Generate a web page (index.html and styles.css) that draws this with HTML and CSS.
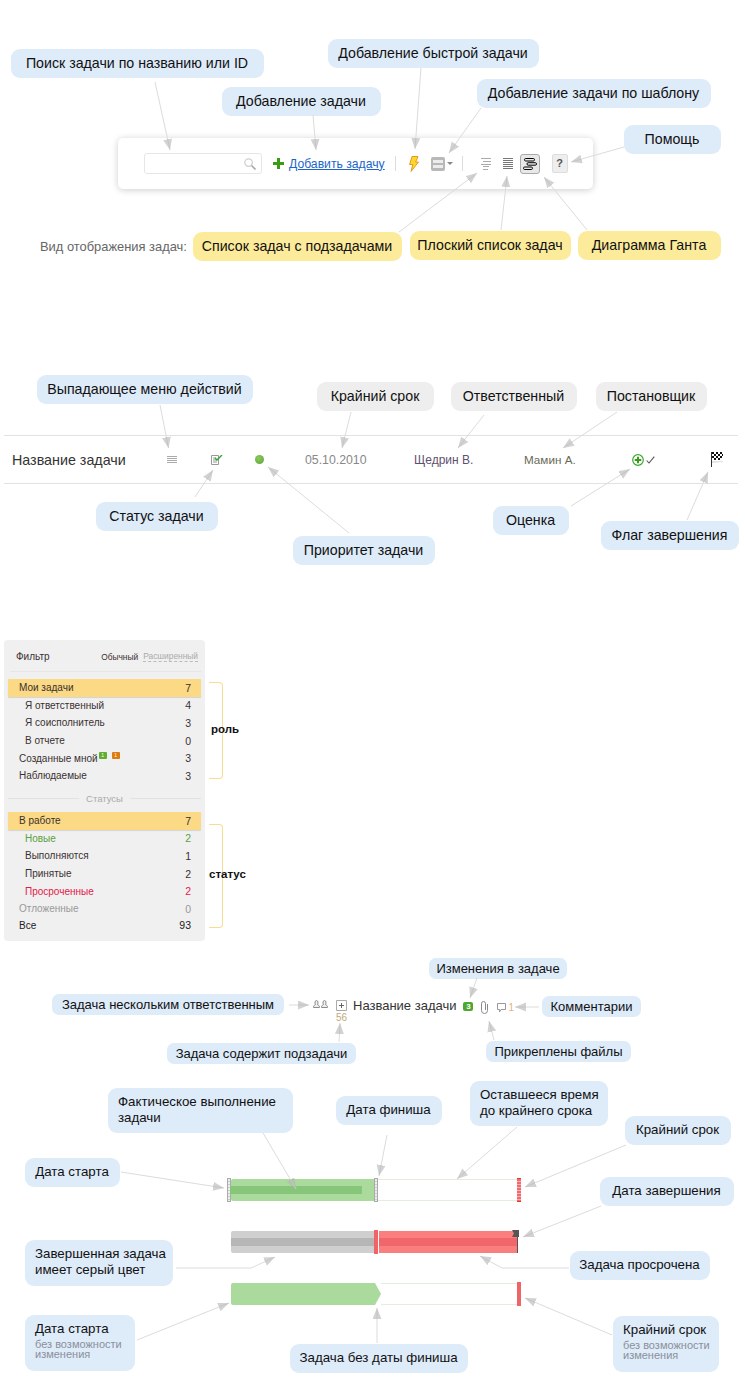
FILE: index.html
```html
<!DOCTYPE html>
<html lang="ru">
<head>
    <meta charset="UTF-8">
    <title>Задачи: условные обозначения</title>
    <link rel="stylesheet" href="styles.css">
</head>
<body>
<div class="page">

    <!-- панель инструментов -->
    <div class="toolbar">
        <div class="search">
            <svg width="12" height="12" viewBox="0 0 12 12"><circle cx="4.6" cy="4.6" r="3.8" fill="none" stroke="#d0d0d0" stroke-width="1.2"/><path d="M7.5 7.5L11.5 11.5" stroke="#aaa" stroke-width="1.6"/></svg>
        </div>
        <svg class="add-icon" width="11" height="11" viewBox="0 0 11 11"><path d="M4 0h3v4h4v3H7v4H4V7H0V4h4z" fill="#3a9c12"/></svg>
        <a class="add-link" href="#">Добавить задачу</a>
        <span class="tool-sep"></span>
        <svg class="bolt" width="10" height="16" viewBox="0 0 10 16"><path d="M3 .5h6L6.6 6h2.9L2 15.5l1.8-7H.6z" fill="#ffd62e" stroke="#e59a1c"/></svg>
        <svg class="tpl" width="14" height="14" viewBox="0 0 14 14"><rect width="14" height="14" rx="2" fill="#b8b8b8"/><path d="M2 3h10v3H2zM2 8h10v3H2z" fill="#ececec"/></svg>
        <span class="caret"></span>
        <span class="tool-sep sep-two"></span>
        <svg class="view-one" width="10" height="12" viewBox="0 0 10 12"><path d="M0 .5h10M2 3.500h8M0 6.500h10M2 8.500h6M2 11.500h5" stroke="#aaa" fill="none"/></svg>
        <svg class="view-two" width="10" height="12" viewBox="0 0 10 12"><path d="M0 .5h10M0 2.500h10M0 4.500h10M0 6.500h10M0 8.500h10M0 10.500h10" stroke="#777" fill="none"/></svg>
        <span class="view-btn">
            <svg width="14" height="12" viewBox="0 0 14 12"><rect x="1.500" y=".5" width="10" height="2.500" rx="1.200" fill="none" stroke="#000"/><rect x="4" y="4.700" width="9.500" height="2.500" rx="1.200" fill="none" stroke="#000"/><rect x=".5" y="9" width="9" height="2.500" rx="1.200" fill="none" stroke="#000"/></svg>
        </span>
        <span class="help-btn">?</span>
    </div>
    <p class="view-label">Вид отображения задач:</p>

    <!-- строка задачи -->
    <div class="task-row">
        <span class="task-name">Название задачи</span>
        <span><svg class="cell-icon" width="10" height="8" viewBox="0 0 10 8"><path d="M0 .5h10M0 2.500h10M0 4.500h10M0 6.500h10" stroke="#aaa" fill="none"/></svg></span>
        <span><svg class="cell-icon" width="12" height="10" viewBox="0 0 12 10"><path d="M.5.500h7v9h-7zM2 3h3M2 5h4M2 7h4" stroke="#999" fill="none"/><path d="M4 3l2 2 5-5" stroke="#2da52d" stroke-width="1.400" fill="none"/></svg></span>
        <span class="prio-dot"></span>
        <span class="task-date">05.10.2010</span>
        <span class="task-resp">Щедрин В.</span>
        <span class="task-author">Мамин А.</span>
        <span class="task-mark">
            <svg width="12" height="12" viewBox="0 0 12 12"><circle cx="6" cy="6" r="5.300" fill="#fff" stroke="#3aa83a" stroke-width="1.200"/><path d="M5 2.700h2V5h2.300v2H7v2.300H5V7H2.700V5H5z" fill="#3a9c12"/></svg>
            <svg width="9" height="8" viewBox="0 0 9 8"><path d="M.7 4.500L3 7 8.300.7" stroke="#555" stroke-width="1.100" fill="none"/></svg>
        </span>
        <span>
            <svg class="flag" width="13" height="15" viewBox="0 0 13 15"><path d="M.5 0v15" stroke="#333"/><path d="M1 9h11v1L1 11z" fill="#e4e4e4"/><path d="M1 0h2v2H1zM5 0h2v2H5zM9 0h2v2H9zM3 2h2v2H3zM7 2h2v2H7zM11 2h1v2h-1zM1 4h2v2H1zM5 4h2v2H5zM9 4h2v2H9zM3 6h2v2H3zM7 6h2v2H7z" fill="#111"/></svg>
        </span>
    </div>

    <!-- фильтр -->
    <div class="filter">
        <div class="filter-head">
            <span class="filter-title">Фильтр</span>
            <span class="filter-mode">Обычный</span>
            <span class="filter-mode mode-off">Расширенный</span>
        </div>
        <div class="filter-item active"><span>Мои задачи</span><b>7</b></div>
        <div class="filter-item sub"><span>Я ответственный</span><b>4</b></div>
        <div class="filter-item sub"><span>Я соисполнитель</span><b>3</b></div>
        <div class="filter-item sub"><span>В отчете</span><b>0</b></div>
        <div class="filter-item"><span>Созданные мной<i class="mini green">1</i><i class="mini orange">1</i></span><b>3</b></div>
        <div class="filter-item"><span>Наблюдаемые</span><b>3</b></div>
        <div class="filter-sep"><span>Статусы</span></div>
        <div class="filter-item active"><span>В работе</span><b>7</b></div>
        <div class="filter-item sub st-new"><span>Новые</span><b>2</b></div>
        <div class="filter-item sub"><span>Выполняются</span><b>1</b></div>
        <div class="filter-item sub"><span>Принятые</span><b>2</b></div>
        <div class="filter-item sub st-late"><span>Просроченные</span><b>2</b></div>
        <div class="filter-item st-off"><span>Отложенные</span><b>0</b></div>
        <div class="filter-item st-all"><span>Все</span><b>93</b></div>
    </div>

    <!-- название задачи с иконками -->
    <div class="title-row">
        <svg class="people" width="15" height="8" viewBox="0 0 15 8"><path d="M.5 7.500c0-2 1-2.500 2-3-1-1.500-.5-4 1-4s2 2.500 1 4c1 .5 2 1 2 3zM8.500 7.500c0-2 1-2.500 2-3-1-1.500-.5-4 1-4s2 2.500 1 4c1 .5 2 1 2 3z" fill="#eee" stroke="#8c8c8c"/></svg>
        <span class="plus-col">
            <svg width="11" height="11" viewBox="0 0 11 11"><path d="M.5.500h10v10H.5z" fill="#fff" stroke="#aaa"/><path d="M3 5.500h5M5.500 3v5" stroke="#666"/></svg>
            <span class="sub-count">56</span>
        </span>
        <span class="title-text">Название задачи</span>
        <span class="change-badge">3</span>
        <svg class="clip" width="9" height="13" viewBox="0 0 9 13"><path d="M7.500 3v6.500a3 3 0 0 1-6 0V2.500a2 2 0 0 1 4 0V9" fill="none" stroke="#8a8a8a"/></svg>
        <svg class="bubble" width="9" height="10" viewBox="0 0 9 10"><path d="M.5.500h8v6H4L2.500 9V6.500h-2z" fill="none" stroke="#999"/></svg>
        <span class="comment-count">1</span>
    </div>

    <!-- диаграмма -->
    <div class="gantt">
        <div class="gantt-row">
            <span class="mark-grey"></span>
            <div class="fill fill-green"><span class="band band-green"></span></div>
            <span class="mark-grey"></span>
            <span class="track"></span>
            <span class="mark-red mark-dotted"></span>
        </div>
        <div class="gantt-row row-shift">
            <div class="fill fill-grey"><span class="band band-grey"></span></div>
            <span class="mark-red mark-white"></span>
            <div class="fill fill-red"><span class="band band-red"></span>
                <svg class="end-flag" width="7" height="7" viewBox="0 0 7 7"><path d="M0 0h7v7H0L2 3.500z" fill="#555"/></svg>
            </div>
        </div>
        <div class="gantt-row row-shift">
            <div class="fill fill-arrow"></div>
            <span class="track track-short"></span>
            <span class="mark-red"></span>
        </div>
    </div>

    <!-- скобки -->
    <div class="bracket br-role"></div>
    <div class="bracket-label lb-role">роль</div>
    <div class="bracket br-status"></div>
    <div class="bracket-label lb-status">статус</div>

    <!-- подписи -->
    <div class="note n-search">Поиск задачи по названию или ID</div>
    <div class="note n-quick">Добавление быстрой задачи</div>
    <div class="note n-add">Добавление задачи</div>
    <div class="note n-tpl">Добавление задачи по шаблону</div>
    <div class="note n-help">Помощь</div>
    <div class="note yellow n-tree">Список задач с подзадачами</div>
    <div class="note yellow n-flat">Плоский список задач</div>
    <div class="note yellow n-gantt">Диаграмма Ганта</div>

    <div class="note n-menu">Выпадающее меню действий</div>
    <div class="note grey n-due">Крайний срок</div>
    <div class="note grey n-resp">Ответственный</div>
    <div class="note grey n-author">Постановщик</div>
    <div class="note n-status">Статус задачи</div>
    <div class="note n-prio">Приоритет задачи</div>
    <div class="note n-mark">Оценка</div>
    <div class="note n-flag">Флаг завершения</div>

    <div class="note small n-changes">Изменения в задаче</div>
    <div class="note small n-multi">Задача нескольким ответственным</div>
    <div class="note small n-comments">Комментарии</div>
    <div class="note small n-subs">Задача содержит подзадачи</div>
    <div class="note small n-files">Прикреплены файлы</div>

    <div class="note chart left n-fact">Фактическое выполнение<br>задачи</div>
    <div class="note chart n-finish">Дата финиша</div>
    <div class="note chart left n-left">Оставшееся время<br>до крайнего срока</div>
    <div class="note chart n-due2">Крайний срок</div>
    <div class="note chart n-start">Дата старта</div>
    <div class="note chart n-done">Дата завершения</div>
    <div class="note chart left n-greyed">Завершенная задача<br>имеет серый цвет</div>
    <div class="note chart n-late">Задача просрочена</div>
    <div class="note chart left n-start2">Дата старта<small>без возможности<br>изменения</small></div>
    <div class="note chart n-nofin">Задача без даты финиша</div>
    <div class="note chart left n-due3">Крайний срок<small>без возможности<br>изменения</small></div>

    <!-- стрелки -->
    <svg class="arrows" width="745" height="1390" viewBox="0 0 745 1390">
        <defs>
            <marker id="head" markerUnits="userSpaceOnUse" markerWidth="12" markerHeight="10" refX="11" refY="4.500" orient="auto">
                <path d="M0 0L11 4.500 0 9z" fill="#b4b4b4" fill-opacity=".6"/>
            </marker>
        </defs>
        <g fill="none" stroke="#dcdcdc" marker-end="url(#head)">
            <path d="M155 82L170 150"/>
            <path d="M313 115L316 150"/>
            <path d="M421 68L415 149"/>
            <path d="M481 108L449 153"/>
            <path d="M624 147L571 162"/>
            <path d="M399 232L477 173"/>
            <path d="M501 230L507 176"/>
            <path d="M587 230L544 177"/>

            <path d="M160 405L168.500 448"/>
            <path d="M351 412L342 448"/>
            <path d="M484 415L458 448"/>
            <path d="M617 412L563 448"/>
            <path d="M195 497L213 470"/>
            <path d="M349 533L268 467"/>
            <path d="M571 506L630 469"/>
            <path d="M687 520L708 472"/>

            <path d="M289 1005L309 1005"/>
            <path d="M477 978L470 998"/>
            <path d="M339 1042L340 1023"/>
            <path d="M494 1040L489 1021"/>
            <path d="M539 1007L515 1007"/>

            <path d="M263 1133L296 1189"/>
            <path d="M387 1135L379 1176"/>
            <path d="M517 1127L457 1179"/>
            <path d="M626 1145L525 1187"/>
            <path d="M121 1172L224 1188"/>
            <path d="M601 1206L523 1237"/>
            <path d="M176 1268H251L275 1257"/>
            <path d="M569 1268H502L480 1256"/>
            <path d="M137 1340L229 1303"/>
            <path d="M377 1343V1308"/>
            <path d="M612 1335L525 1298"/>
        </g>
    </svg>
</div>
</body>
</html>
```
FILE: styles.css
```css
body {
    margin: 0;
    background-color: #fff;
    color: #222;
    font-family: "Liberation Sans", Arial, sans-serif;
}
.page {
    position: relative;
    box-sizing: border-box;
    width: 745px;
    height: 1390px;
    padding-top: 138px;
    overflow: hidden;
}

/* toolbar */
.toolbar {
    display: flex;
    align-items: center;
    box-sizing: border-box;
    width: 475px;
    height: 51px;
    margin-left: 118px;
    padding-left: 26px;
    background-color: #fff;
    border-radius: 5px;
    box-shadow: 0 1px 7px rgba(0,0,0,0.2);
}
.search {
    display: flex;
    align-items: center;
    justify-content: flex-end;
    box-sizing: border-box;
    width: 118px;
    height: 21px;
    padding-right: 5px;
    border: 1px solid #e6e6e6;
    border-radius: 3px;
}
.add-icon {
    margin-left: 11px;
}
.add-link {
    margin-left: 5px;
    color: #1a66cc;
    font-size: 12.200px;
}
.tool-sep {
    width: 1px;
    height: 15px;
    margin-left: 10px;
    background-color: #ddd;
}
.bolt {
    margin-left: 13px;
}
.tpl {
    margin-left: 12px;
}
.caret {
    width: 0;
    height: 0;
    margin-left: 2px;
    border: 3px solid transparent;
    border-top-color: #888;
    border-bottom: none;
}
.sep-two {
    margin-left: 9px;
}
.view-one {
    margin-left: 18px;
}
.view-two {
    margin-left: 12px;
}
.view-btn {
    display: flex;
    align-items: center;
    justify-content: center;
    box-sizing: border-box;
    width: 20px;
    height: 20px;
    margin-left: 7px;
    background-color: #e8e8e8;
    border: 1px solid #aaa;
    border-radius: 3px;
}
.help-btn {
    box-sizing: border-box;
    width: 16px;
    height: 19px;
    margin-left: 12px;
    background-color: #eee;
    border: 1px solid #ddd;
    border-radius: 2px;
    color: #555;
    font-size: 11px;
    font-weight: bold;
    line-height: 17px;
    text-align: center;
}
.view-label {
    margin: 49px 0 0 40px;
    color: #666;
    font-size: 12.900px;
    line-height: 18px;
}

/* task row */
.task-row {
    display: grid;
    grid-template-columns: 155px 44px 44px 50px 109px 110px 108px 79px auto;
    align-items: center;
    box-sizing: border-box;
    width: 734px;
    height: 49px;
    margin: 179px 0 0 4px;
    padding-left: 8px;
    border-top: 1px solid #e2e2e2;
    border-bottom: 1px solid #e2e2e2;
    font-size: 12px;
}
.task-name {
    font-size: 14.300px;
    color: #333;
}
.cell-icon {
    display: block;
}
.prio-dot {
    width: 9px;
    height: 9px;
    border-radius: 50%;
    background: radial-gradient(circle at 40% 35%, #8cc95a, #5aa53a);
}
.task-date {
    color: #888;
    font-size: 12.300px;
}
.task-resp {
    color: #5f5070;
}
.task-author {
    color: #6a6a58;
    font-size: 11.700px;
}
.task-mark {
    display: flex;
    align-items: center;
    gap: 2px;
}
.flag {
    display: block;
}

/* filter */
.filter {
    box-sizing: border-box;
    width: 201px;
    height: 301px;
    margin: 156px 0 0 4px;
    padding: 0 4px;
    background-color: #f0f0f0;
    border-radius: 4px;
    font-size: 10px;
    color: #3a3030;
}
.filter-head {
    display: flex;
    align-items: center;
    height: 29px;
    margin: 0 0 7px 2px;
    padding: 2px 3px 0 6px;
    border-bottom: 1px solid #e6e6e6;
    font-size: 8.400px;
}
.filter-title {
    margin-right: auto;
    font-size: 10px;
}
.filter-mode {
    margin-left: 5px;
}
.mode-off {
    color: #aaa;
    border-bottom: 1px dashed #bbb;
}
.filter-item {
    display: flex;
    justify-content: space-between;
    align-items: center;
    height: 17.600px;
    padding: 0 10px 0 11px;
}
.filter-item b {
    font-weight: normal;
    font-size: 10.500px;
}
.filter-item.active {
    background-color: #fbd985;
    box-shadow: 0 1px 1px rgba(0,0,0,0.12);
    border-radius: 1px;
}
.filter-item.sub {
    padding-left: 17px;
}
.st-new {
    color: #5aa040;
}
.st-late {
    color: #e0204a;
}
.st-off {
    color: #999;
}
.st-all {
    height: 15.500px;
    color: #222;
}
.mini {
    display: inline-block;
    width: 8px;
    height: 7px;
    margin-left: 1px;
    border-radius: 1px;
    color: #fff;
    font-size: 5px;
    font-style: normal;
    line-height: 7px;
    text-align: center;
    vertical-align: 5px;
}
.mini.green {
    background-color: #5fae2e;
}
.mini.orange {
    margin-left: 5px;
    background-color: #dd7a10;
}
.filter-sep {
    display: flex;
    align-items: center;
    justify-content: center;
    gap: 7px;
    height: 27.400px;
    color: #aaa;
    font-size: 9.500px;
}
.filter-sep::before, .filter-sep::after {
    content: "";
    flex: 1;
    height: 1px;
    background-color: #e2e2e2;
}

/* brackets */
.bracket {
    position: absolute;
    left: 209px;
    box-sizing: border-box;
    width: 14px;
    border: 1px solid #f8dc90;
    border-left: none;
    border-radius: 0 4px 4px 0;
}
.br-role {
    top: 682px;
    height: 97px;
}
.br-status {
    top: 824px;
    height: 104px;
}
.bracket-label {
    position: absolute;
    color: #111;
    font-size: 11.500px;
    font-weight: bold;
    line-height: 14px;
}
.lb-role {
    left: 211px;
    top: 722px;
}
.lb-status {
    left: 209px;
    top: 867px;
}

/* title row */
.title-row {
    display: flex;
    align-items: flex-start;
    height: 25px;
    margin: 59px 0 0 313px;
}
.people {
    margin-right: 8px;
}
.plus-col {
    display: flex;
    flex-direction: column;
    align-items: flex-start;
    width: 17px;
}
.plus-col svg {
    display: block;
}
.sub-count {
    margin-top: 1px;
    color: #bfa878;
    font-size: 10px;
    line-height: 11px;
}
.title-text {
    margin-top: -2px;
    color: #333;
    font-size: 13px;
    line-height: 16px;
}
.change-badge {
    box-sizing: border-box;
    width: 10px;
    height: 9px;
    margin: 2px 0 0 7px;
    background-color: #4ea82e;
    border-radius: 2px;
    color: #fff;
    font-size: 8px;
    font-weight: bold;
    line-height: 9px;
    text-align: center;
}
.clip {
    margin: 1px 0 0 7px;
}
.bubble {
    margin: 3px 0 0 8px;
}
.comment-count {
    margin: 2px 0 0 2px;
    color: #e8b07a;
    font-size: 10px;
    line-height: 12px;
}

/* gantt */
.gantt {
    display: flex;
    flex-direction: column;
    gap: 28px;
    width: 294px;
    margin: 153px 0 0 227px;
}
.gantt-row {
    display: flex;
    align-items: center;
    height: 24px;
}
.row-shift {
    margin-left: 4px;
}
.mark-grey {
    box-sizing: border-box;
    flex: none;
    width: 4px;
    height: 24px;
    border: 1px solid #aaa;
    background: repeating-linear-gradient(#eee 0 2px, #ccc 2px 3px);
}
.mark-red {
    flex: none;
    box-sizing: border-box;
    width: 4px;
    height: 24px;
    background-color: #ee6468;
}
.mark-dotted {
    border-top: 1px solid #e33;
    border-bottom: 1px solid #e33;
    background: repeating-linear-gradient(#f06a70 0 2px, #f9b0b0 2px 3px);
}
.mark-white {
    width: 5px;
    border-right: 1px solid #fff;
}
.fill {
    box-sizing: border-box;
    flex: none;
    width: 143px;
    height: 22px;
    padding-top: 7px;
    border-radius: 2px 0 0 2px;
}
.fill-green {
    background-color: #abda9d;
}
.fill-grey {
    background-color: #cfcfcf;
}
.fill-red {
    position: relative;
    width: 139px;
    border-radius: 0;
    border-right: 1px solid #555;
    background-color: #fb7e7e;
}
.fill-arrow {
    width: 150px;
    background-color: #abda9d;
    clip-path: polygon(0 0, 144px 0, 150px 50%, 144px 100%, 0 100%);
}
.band {
    display: block;
    height: 8px;
}
.band-green {
    width: 132px;
    margin-left: -1px;
    background-color: #87c67a;
}
.band-grey {
    background-color: #b6b6b6;
}
.band-red {
    background-color: #f0666a;
}
.end-flag {
    position: absolute;
    right: -2px;
    top: -1px;
}
.track {
    box-sizing: border-box;
    flex: 1;
    height: 22px;
    border-top: 1px solid #e3efdc;
    border-bottom: 1px solid #e3efdc;
}

/* callouts */
.note {
    position: absolute;
    display: flex;
    flex-direction: column;
    justify-content: center;
    align-items: center;
    box-sizing: border-box;
    height: 29px;
    padding: 0 1px 2px 0;
    background-color: #deebf9;
    border-radius: 9px;
    color: #111;
    font-size: 14.200px;
    line-height: 16px;
    white-space: nowrap;
}
.note.yellow {
    background-color: #fdeb9c;
}
.note.grey {
    background-color: #eee;
}
.note.small {
    height: 21px;
    padding: 0;
    border-radius: 7px;
    font-size: 13px;
}
.note.chart {
    font-size: 13.300px;
}
.note.left {
    display: block;
    padding: 6px 10px;
}
.note small {
    display: block;
    margin-top: 2px;
    color: #8a9099;
    font-size: 11px;
    line-height: 10px;
}
.n-search { left: 11px; top: 49px; width: 253px; }
.n-quick { left: 328px; top: 39px; width: 211px; }
.n-add { left: 222px; top: 87px; width: 159px; }
.n-tpl { left: 477px; top: 79px; width: 234px; }
.n-help { left: 624px; top: 125px; width: 97px; }
.n-tree { left: 193px; top: 232px; width: 209px; }
.n-flat { left: 410px; top: 231px; width: 161px; }
.n-gantt { left: 578px; top: 231px; width: 143px; }
.n-menu { left: 37px; top: 375px; width: 216px; }
.n-due { left: 317px; top: 382px; width: 117px; }
.n-resp { left: 451px; top: 382px; width: 126px; }
.n-author { left: 596px; top: 382px; width: 111px; }
.n-status { left: 96px; top: 502px; width: 122px; }
.n-prio { left: 293px; top: 536px; width: 142px; }
.n-mark { left: 493px; top: 506px; width: 76px; }
.n-flag { left: 601px; top: 521px; width: 138px; }
.n-changes { left: 429px; top: 958px; width: 138px; }
.n-multi { left: 52px; top: 994px; width: 232px; }
.n-comments { left: 542px; top: 996px; width: 99px; }
.n-subs { left: 167px; top: 1043px; width: 189px; }
.n-files { left: 486px; top: 1041px; width: 145px; }
.n-fact { left: 108px; top: 1088px; width: 185px; height: 45px; }
.n-finish { left: 336px; top: 1096px; width: 106px; }
.n-left { left: 470px; top: 1081px; width: 138px; height: 45px; }
.n-due2 { left: 625px; top: 1116px; width: 106px; }
.n-start { left: 25px; top: 1158px; width: 95px; }
.n-done { left: 600px; top: 1177px; width: 134px; }
.n-greyed { left: 25px; top: 1240px; width: 148px; height: 46px; }
.n-late { left: 570px; top: 1251px; width: 140px; }
.n-start2 { left: 25px; top: 1315px; width: 110px; height: 56px; }
.n-nofin { left: 290px; top: 1344px; width: 178px; }
.n-due3 { left: 613px; top: 1316px; width: 106px; height: 56px; }

.arrows {
    position: absolute;
    left: 0;
    top: 0;
}
```
